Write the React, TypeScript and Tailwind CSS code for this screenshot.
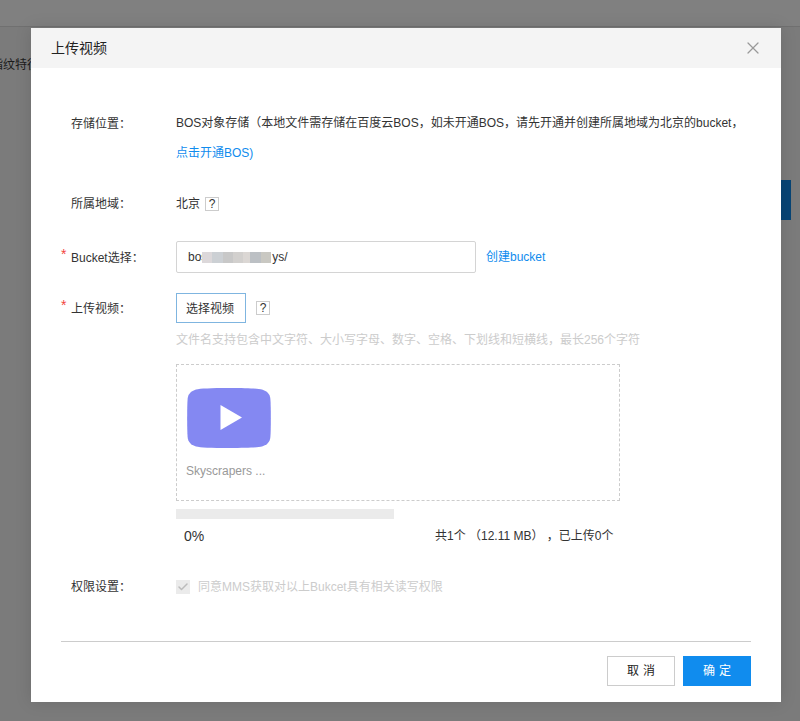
import { Check, X } from 'lucide-react'

const font = { fontFamily: '"Liberation Sans", "Noto Sans CJK SC", sans-serif' }

function Help() {
  return (
    <span className="flex h-[14px] w-[14px] items-center justify-center border border-[#cccccc] text-xs leading-none text-[#333333]">
      ?
    </span>
  )
}

function Label({ text, required }: { text: string; required?: boolean }) {
  return (
    <div className="relative w-[105px] shrink-0 pt-[1px] text-[#333333]">
      {required && <span className="absolute left-[-10px] top-[2px] text-sm text-[#f2453d]">*</span>}
      {text}
    </div>
  )
}

export default function App() {
  return (
    <div className="relative h-[721px] w-[800px] overflow-hidden bg-[#7b7b7b] text-xs" style={font}>
      <div className="h-[27px] border-b border-[#707070] bg-[#808080]" />
      <div className="absolute left-[-9px] top-[57px] text-[#1c1c1c]">指纹特征</div>
      <div className="absolute left-[781px] top-[180px] h-10 w-[10px] bg-[#074475]" />

      <div className="absolute left-[31px] top-[28px] flex h-[674px] w-[750px] flex-col bg-white shadow-[0_0_16px_rgba(0,0,0,0.12)]">
        <div className="flex h-10 shrink-0 items-center justify-between bg-[#f4f4f4] pl-5 pr-[18px]">
          <h1 className="text-sm font-normal text-[#222222]">上传视频</h1>
          <X className="h-5 w-5 text-[#999999]" strokeWidth={1.5} />
        </div>

        <div className="flex-1 pl-10 pr-[30px] leading-[30px]">
          <div className="mt-10 flex">
            <Label text="存储位置：" />
            <div className="text-[#333333]">
              <p>BOS对象存储（本地文件需存储在百度云BOS，如未开通BOS，请先开通并创建所属地域为北京的bucket，</p>
              <a className="text-[#108cee]">点击开通BOS)</a>
            </div>
          </div>

          <div className="mt-5 flex">
            <Label text="所属地域：" />
            <div className="flex items-center text-[#333333]">
              北京
              <span className="ml-[5px]">
                <Help />
              </span>
            </div>
          </div>

          <div className="mt-[22px] flex items-center">
            <Label text="Bucket选择：" required />
            <div className="flex h-8 w-[300px] items-center rounded-[2px] border border-[#d4d4d4] pl-[11px] text-[#333333]">
              bos
              <span className="ml-[-5px] mr-[1px] h-[11px] w-[69px] bg-[linear-gradient(90deg,#dcd8da_0_15%,#ccd0d4_15%_30%,#c8c8c8_30%_45%,#d2d0ce_45%_60%,#dbd7d4_60%_70%,#bcc0c4_70%_85%,#c9c8c2_85%_100%)]" />
              ys/
            </div>
            <a className="ml-[10px] text-[#108cee]">创建bucket</a>
          </div>

          <div className="mt-5 flex">
            <Label text="上传视频：" required />
            <div className="w-[444px]">
              <div className="flex items-center">
                <button className="h-[30px] w-[70px] border border-[#7fb5e0] pr-[2px] text-[#333333]">选择视频</button>
                <span className="ml-[10px]">
                  <Help />
                </span>
              </div>
              <p className="mt-[2px] whitespace-nowrap text-[#cccccc]">
                文件名支持包含中文字符、大小写字母、数字、空格、下划线和短横线，最长256个字符
              </p>
              <div className="mt-[9px] h-[137px] border border-dashed border-[#cccccc] pl-[9px] pt-[23px]">
                <svg width="84" height="60" viewBox="0 0 84 60" className="ml-[1px] block">
                  <path
                    d="M42 0C60 0 71 .5 75 1.5 80 3 83 6 83.400 11 84 20 84 40 83.400 49 83 54 80 57 75 58.500 71 59.500 60 60 42 60 24 60 13 59.500 9 58.500 4 57 1 54 .6 49 0 40 0 20 .6 11 1 6 4 3 9 1.500 13 .5 24 0 42 0Z"
                    fill="#8488f2"
                  />
                  <path d="M33.500 17V42L55 29.500Z" fill="#ffffff" />
                </svg>
                <p className="mt-[8px] text-[#999999]">Skyscrapers ...</p>
              </div>
              <div className="mt-2 h-[10px] w-[218px] bg-[#ebebeb]" />
              <div className="mt-[2px] flex text-[#333333]">
                <span className="ml-2 w-[251px] text-sm leading-[30px]">0%</span>
                <span>共1个 （12.11 MB） ，已上传0个</span>
              </div>
            </div>
          </div>

          <div className="mt-5 flex items-center">
            <Label text="权限设置：" />
            <span className="flex h-[14px] w-[14px] items-center justify-center bg-[#ebebeb]">
              <Check className="h-3 w-3 text-[#bbbbbb]" strokeWidth={3} />
            </span>
            <span className="ml-2 text-[#cccccc]">同意MMS获取对以上Bukcet具有相关读写权限</span>
          </div>
        </div>

        <div className="mx-[30px] mb-4 flex justify-end gap-2 border-t border-[#cccccc] pt-[14px]">
          <button className="h-[30px] w-[68px] border border-[#cccccc] pl-1 tracking-[4px] text-[#222222]">取消</button>
          <button className="h-[30px] w-[68px] bg-[#108cee] pl-1 tracking-[4px] text-white">确定</button>
        </div>
      </div>
    </div>
  )
}
